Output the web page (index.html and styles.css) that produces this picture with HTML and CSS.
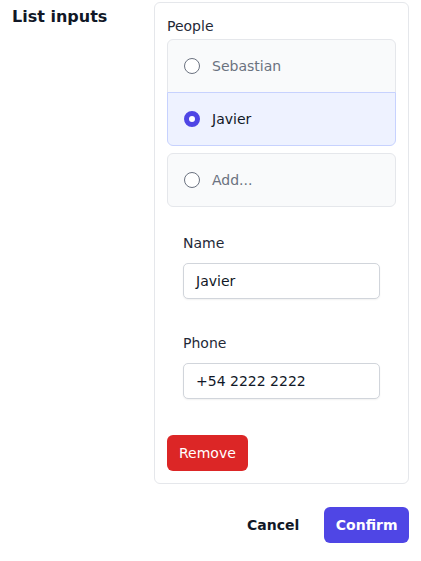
FILE: index.html
```html
<!DOCTYPE html>
<html>
<head>
<meta charset="utf-8">
<link rel="stylesheet" href="styles.css">
</head>
<body>
<div class="page">
  <div class="row">
    <h2 class="heading">List inputs</h2>
    <div class="card">
      <div class="label">People</div>
      <div class="group">
        <div class="item first"><span class="radio"></span><span class="muted">Sebastian</span></div>
        <div class="item last selected"><span class="radio checked"></span><span>Javier</span></div>
      </div>
      <div class="item single"><span class="radio"></span><span class="muted">Add...</span></div>
      <div class="panel">
        <div class="field">
          <div class="label">Name</div>
          <div class="input">Javier</div>
        </div>
        <div class="field">
          <div class="label">Phone</div>
          <div class="input">+54 2222 2222</div>
        </div>
      </div>
      <button class="btn danger">Remove</button>
    </div>
  </div>
  <div class="footer">
    <button class="btn plain">Cancel</button>
    <button class="btn primary">Confirm</button>
  </div>
</div>
</body>
</html>
```
FILE: styles.css
```css
* { box-sizing: border-box; }
html, body { margin: 0; padding: 0; background: #fff; }
body {
  font-family: "DejaVu Sans", "Liberation Sans", sans-serif;
  font-size: 14px;
  line-height: 20px;
  color: #111827;
}
.page { padding: 2px 12px 0 12px; }
.row { display: flex; align-items: flex-start; }
.heading {
  margin: 3px 0 0 0;
  width: 142px;
  flex: none;
  font-size: 16px;
  line-height: 24px;
  font-weight: bold;
  color: #111827;
}
.card {
  flex: 1;
  border: 1px solid #e5e7eb;
  border-radius: 6px;
  padding: 13px 12px 12px 12px;
  background: #fff;
}
.label { line-height: 20px; color: #1f2937; }
.card > .label { margin-bottom: 3px; }
.group { display: flex; flex-direction: column; }
.item {
  display: flex;
  align-items: center;
  gap: 12px;
  padding: 16px 16px;
  border: 1px solid #e5e7eb;
  background: #f9fafb;
  position: relative;
}
.item.first { border-radius: 6px 6px 0 0; }
.item.last { border-radius: 0 0 6px 6px; margin-top: -1px; }
.item.single { border-radius: 6px; margin-top: 7px; }
.item.selected { background: #eef2ff; border-color: #c7d2fe; z-index: 1; }
.muted { color: #6b7280; }
.radio {
  width: 16px;
  height: 16px;
  border-radius: 50%;
  border: 1px solid #6b7280;
  background: #fff;
  flex: none;
}
.radio.checked {
  border: 5px solid #4f46e5;
  background: #fff;
}
.panel {
  padding: 26px 16px 0 16px;
  display: flex;
  flex-direction: column;
  gap: 34px;
}
.field .label { margin-bottom: 10px; }
.input {
  height: 36px;
  border: 1px solid #d1d5db;
  border-radius: 5px;
  padding: 0 12px;
  line-height: 34px;
  color: #111827;
  background: #fff;
  box-shadow: 0 1px 2px rgba(0,0,0,0.06);
}
.btn {
  font-family: inherit;
  font-size: 14px;
  height: 36px;
  border: none;
  border-radius: 6px;
  padding: 0 12px;
  cursor: pointer;
  line-height: 36px;
}
.danger { background: #dc2626; color: #fff; margin-top: 36px; display: block; }
.footer {
  display: flex;
  justify-content: flex-end;
  align-items: center;
  gap: 13px;
  margin-top: 23px;
}
.plain { background: transparent; color: #111827; font-weight: bold; }
.primary { background: #4f46e5; color: #fff; font-weight: bold; padding: 0 11.5px; }
```
